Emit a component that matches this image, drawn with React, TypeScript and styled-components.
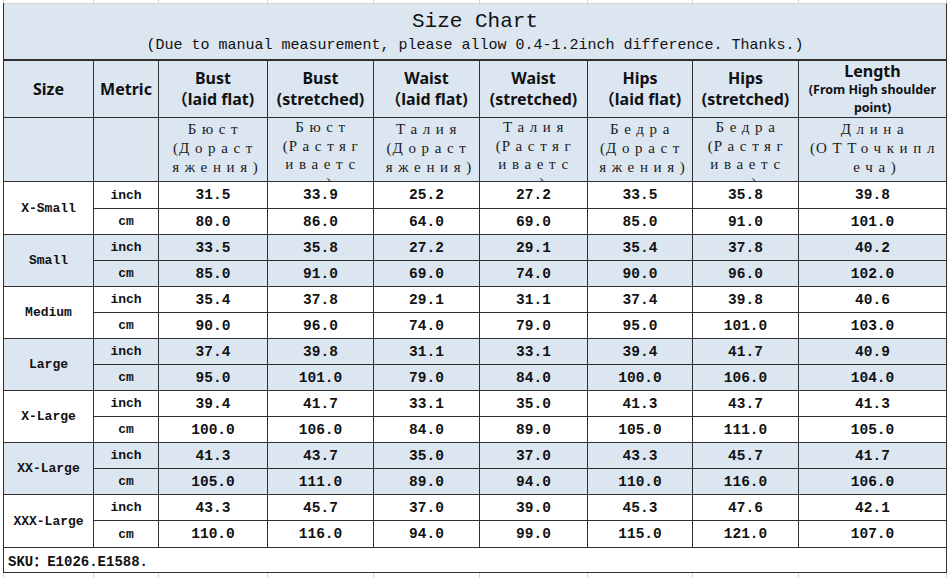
import React from "react";
import styled, { createGlobalStyle } from "styled-components";

const GlobalStyle = createGlobalStyle`
  html, body { margin: 0; padding: 0; background: #ffffff; }
  body { width: 950px; height: 578px; overflow: hidden; }
`;

const COLS = "90px 65px 109px 106px 106px 108px 105px 106px 148px";
const BLUE = "#dce6f1";
const LINE = "#303030";
const GRIDLINE = "#d4d4d4";
const MONO = `"Liberation Mono", "Noto Sans CJK SC", monospace`;

const Sheet = styled.div`
  width: 950px;
  height: 578px;
  box-sizing: border-box;
  padding-left: 3px;
  display: flex;
  flex-direction: column;
`;

const Strip = styled.div<{ $h: number }>`
  display: grid;
  grid-template-columns: 1px ${COLS};
  height: ${(p) => p.$h}px;
`;

const StripCell = styled.div`
  border-right: 1px solid ${GRIDLINE};
`;

const Chart = styled.div`
  display: grid;
  grid-template-columns: ${COLS};
  grid-template-rows: 58px 57px 64px 27px repeat(12, 26px) 27px 25px;
  border-left: 1px solid ${LINE};
  width: max-content;
`;

const Cell = styled.div<{ $bg?: string }>`
  box-sizing: border-box;
  border-right: 1px solid ${LINE};
  border-bottom: 1px solid ${LINE};
  background: ${(p) => p.$bg ?? "#ffffff"};
  display: flex;
  align-items: center;
  justify-content: center;
  text-align: center;
  overflow: hidden;
  color: #111;
`;

const TitleBlock = styled(Cell)`
  grid-column: 1 / -1;
  flex-direction: column;
  justify-content: flex-start;
  padding-top: 6px;
  border-top: 1px solid ${GRIDLINE};
  border-bottom: 2px solid ${LINE};
`;

const Title = styled.div`
  font-family: ${MONO};
  font-size: 21px;
  line-height: 24px;
`;

const Subtitle = styled.div`
  font-family: ${MONO};
  font-size: 15px;
  line-height: 20px;
  margin-top: 2px;
  white-space: pre;
`;

const HeadCell = styled(Cell)`
  flex-direction: column;
  font-family: "Noto Sans", "Noto Sans CJK SC", sans-serif;
  font-weight: 700;
  font-size: 16px;
  line-height: 21px;
`;

const HeadMain = styled.div<{ $tight?: boolean }>`
  line-height: ${(p) => (p.$tight ? "20px" : "21px")};
`;

const HeadSub = styled.div`
  font-size: 12.5px;
  line-height: 18px;
`;

const RuCell = styled(Cell)<{ $long?: boolean }>`
  flex-direction: column;
  justify-content: ${(p) => (p.$long ? "flex-start" : "center")};
  padding-bottom: ${(p) => (p.$long ? "0" : "3px")};
`;

const RuLines = styled.div<{ $long?: boolean }>`
  font-family: "Liberation Serif", "DejaVu Serif", serif;
  font-size: 15px;
  line-height: ${(p) => (p.$long ? "18.5px" : "19px")};
  letter-spacing: 5.6px;
  padding-left: 5px;
  white-space: nowrap;
  color: #1a1a1a;
`;

const Paren = styled.span`
  letter-spacing: 1px;
`;

const SizeCell = styled(Cell)`
  grid-row: span 2;
  font-family: ${MONO};
  font-weight: 700;
  font-size: 13px;
`;

const MetricCell = styled(Cell)`
  font-family: ${MONO};
  font-weight: 700;
  font-size: 13px;
`;

const NumCell = styled(Cell)`
  font-family: ${MONO};
  font-weight: 700;
  font-size: 14.5px;
`;

const SkuRow = styled(Cell)`
  grid-column: 1 / -1;
  justify-content: flex-start;
  padding-left: 4px;
  font-family: ${MONO};
  font-weight: 700;
  font-size: 14px;
`;

type Head = { title: string; sub: string[]; small?: boolean };

const heads: Head[] = [
  { title: "Bust", sub: ["（laid flat)"] },
  { title: "Bust", sub: ["(stretched)"] },
  { title: "Waist", sub: ["（laid flat)"] },
  { title: "Waist", sub: ["(stretched)"] },
  { title: "Hips", sub: ["（laid flat)"] },
  { title: "Hips", sub: ["(stretched)"] },
  { title: "Length", sub: ["(From High shoulder", "point)"], small: true },
];

const ru: string[][] = [
  ["Бюст", "(Дораст", "яжения)"],
  ["Бюст", "(Растяг", "иваетс", "я)"],
  ["Талия", "(Дораст", "яжения)"],
  ["Талия", "(Растяг", "иваетс", "я)"],
  ["Бедра", "(Дораст", "яжения)"],
  ["Бедра", "(Растяг", "иваетс", "я)"],
  ["Длина", "(ОТТочкипл", "еча)"],
];

type SizeRow = { name: string; inch: string[]; cm: string[] };

const sizes: SizeRow[] = [
  { name: "X-Small", inch: ["31.5", "33.9", "25.2", "27.2", "33.5", "35.8", "39.8"], cm: ["80.0", "86.0", "64.0", "69.0", "85.0", "91.0", "101.0"] },
  { name: "Small", inch: ["33.5", "35.8", "27.2", "29.1", "35.4", "37.8", "40.2"], cm: ["85.0", "91.0", "69.0", "74.0", "90.0", "96.0", "102.0"] },
  { name: "Medium", inch: ["35.4", "37.8", "29.1", "31.1", "37.4", "39.8", "40.6"], cm: ["90.0", "96.0", "74.0", "79.0", "95.0", "101.0", "103.0"] },
  { name: "Large", inch: ["37.4", "39.8", "31.1", "33.1", "39.4", "41.7", "40.9"], cm: ["95.0", "101.0", "79.0", "84.0", "100.0", "106.0", "104.0"] },
  { name: "X-Large", inch: ["39.4", "41.7", "33.1", "35.0", "41.3", "43.7", "41.3"], cm: ["100.0", "106.0", "84.0", "89.0", "105.0", "111.0", "105.0"] },
  { name: "XX-Large", inch: ["41.3", "43.7", "35.0", "37.0", "43.3", "45.7", "41.7"], cm: ["105.0", "111.0", "89.0", "94.0", "110.0", "116.0", "106.0"] },
  { name: "XXX-Large", inch: ["43.3", "45.7", "37.0", "39.0", "45.3", "47.6", "42.1"], cm: ["110.0", "116.0", "94.0", "99.0", "115.0", "121.0", "107.0"] },
];

const stripCells = Array.from({ length: 10 }, (_, i) => i);

function RuLine({ text }: { text: string }) {
  return (
    <div>
      {Array.from(text).map((ch, i) =>
        ch === "(" || ch === ")" ? <Paren key={i}>{ch}</Paren> : <React.Fragment key={i}>{ch}</React.Fragment>
      )}
    </div>
  );
}

export default function App() {
  return (
    <>
      <GlobalStyle />
      <Sheet>
        <Strip $h={3}>
          {stripCells.map((i) => (
            <StripCell key={i} />
          ))}
        </Strip>
        <Chart>
          <TitleBlock $bg={BLUE}>
            <Title>Size Chart</Title>
            <Subtitle>(Due to manual measurement, please allow 0.4-1.2inch difference. Thanks.)</Subtitle>
          </TitleBlock>

          <HeadCell $bg={BLUE}>Size</HeadCell>
          <HeadCell $bg={BLUE}>Metric</HeadCell>
          {heads.map((h, i) => (
            <HeadCell key={i} $bg={BLUE}>
              <HeadMain $tight={h.small}>{h.title}</HeadMain>
              {h.small ? (
                h.sub.map((s) => <HeadSub key={s}>{s}</HeadSub>)
              ) : (
                <HeadMain>{h.sub[0]}</HeadMain>
              )}
            </HeadCell>
          ))}

          <Cell $bg={BLUE} />
          <Cell $bg={BLUE} />
          {ru.map((lines, i) => (
            <RuCell key={i} $bg={BLUE} $long={lines.length > 3}>
              <RuLines $long={lines.length > 3}>
                {lines.map((l, j) => (
                  <RuLine key={j} text={l} />
                ))}
              </RuLines>
            </RuCell>
          ))}

          {sizes.map((s, i) => {
            const bg = i % 2 === 1 ? BLUE : "#ffffff";
            return (
              <React.Fragment key={s.name}>
                <SizeCell $bg={bg}>{s.name}</SizeCell>
                <MetricCell $bg={bg}>inch</MetricCell>
                {s.inch.map((v, j) => (
                  <NumCell key={`i${j}`} $bg={bg}>{v}</NumCell>
                ))}
                <MetricCell $bg={bg}>cm</MetricCell>
                {s.cm.map((v, j) => (
                  <NumCell key={`c${j}`} $bg={bg}>{v}</NumCell>
                ))}
              </React.Fragment>
            );
          })}

          <SkuRow>SKU：E1026.E1588.</SkuRow>
        </Chart>
        <Strip $h={5}>
          {stripCells.map((i) => (
            <StripCell key={i} />
          ))}
        </Strip>
      </Sheet>
    </>
  );
}
